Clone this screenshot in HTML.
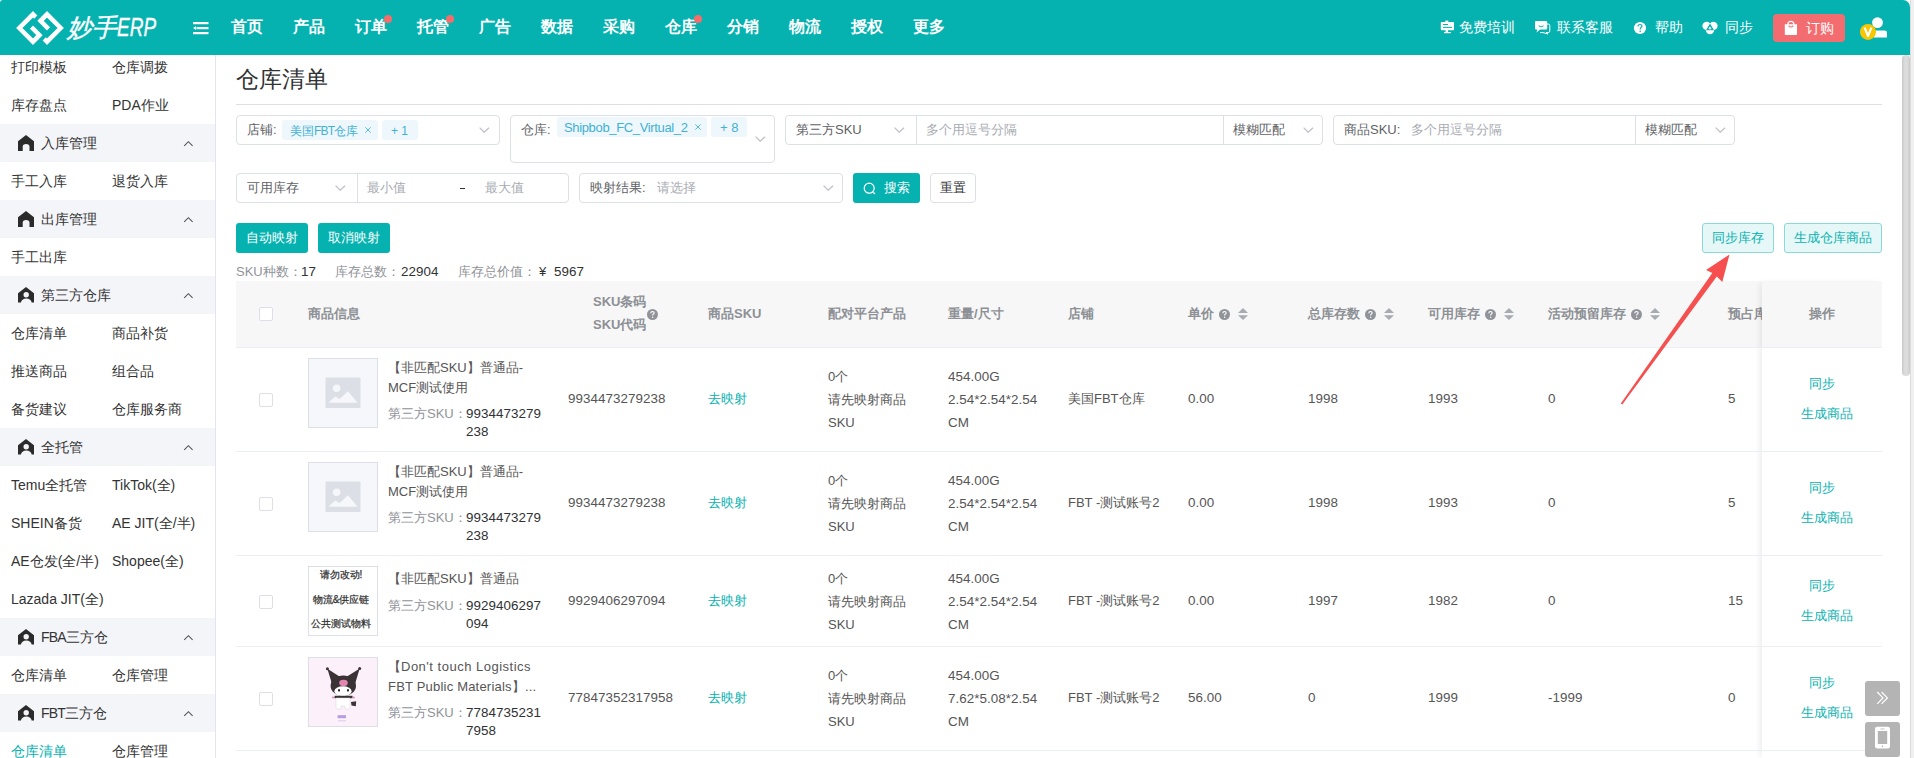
<!DOCTYPE html>
<html><head><meta charset="utf-8">
<style>
*{box-sizing:border-box;margin:0;padding:0}
html,body{width:1914px;height:758px;overflow:hidden;background:#fff}
body{position:relative;font-family:"Liberation Sans",sans-serif;font-size:13px;color:#333}
.a{position:absolute;white-space:nowrap}
#hdr{position:absolute;left:0;top:0;width:1910px;height:55px;background:#05b2b0;border-radius:3px 7px 0 0}
.nav{position:absolute;top:17px;font-size:16px;font-weight:bold;color:#fff;line-height:20px}
.dot{position:absolute;width:8px;height:8px;border-radius:50%;background:#f56c6c}
.hr{position:absolute;top:17px;font-size:14px;color:#fff;line-height:20px;font-weight:500}
#side{position:absolute;left:0;top:55px;width:216px;height:703px;border-right:1px solid #e4e4ee;overflow:hidden}
.si{position:absolute;font-size:14px;color:#333;line-height:20px}
.grp{position:absolute;left:0;width:215px;height:38px;background:#f4f5f9}
.grp .t{position:absolute;left:41px;top:9px;font-size:14px;line-height:20px;color:#333}
.grp svg.ic{position:absolute;left:18px;top:11px}
.grp svg.ch{position:absolute;left:183px;top:16px}
.box{position:absolute;border:1px solid #dcdfe6;border-radius:4px;background:#fff}
.lbl{position:absolute;font-size:13px;color:#606266;line-height:18px}
.ph{position:absolute;font-size:13px;color:#a8abb2;line-height:18px}
.tag{position:absolute;height:20px;background:#eef7fb;border-radius:3px;color:#48b4d8;font-size:12px;line-height:20px;padding:0 8px}
.chev{position:absolute}
.btn{position:absolute;height:30px;border-radius:3px;font-size:13px;line-height:30px;text-align:center}
.th{position:absolute;font-size:13px;font-weight:bold;color:#8d9095;line-height:18px}
.td{position:absolute;font-size:13px;color:#555;line-height:18px}
.lnk{color:#0ab1ae}
.tagt{font-size:12px;line-height:18px;color:#42b1d6}
.num{font-size:13.4px!important;letter-spacing:0.05px}
.cb{position:absolute;left:259px;width:14px;height:14px;border:1px solid #dcdfe6;border-radius:2px;background:#fff}
.hl{position:absolute;left:236px;width:1646px;height:1px;background:#ebeef5}
</style></head><body>

<!-- HEADER -->
<div id="hdr">
  <svg class="a" style="left:0;top:0" width="80" height="55" viewBox="0 0 80 55">
    <g fill="none" stroke="#fff" stroke-width="4.5" stroke-linejoin="miter" stroke-miterlimit="10">
      <polyline points="35.8,17.1 33,14.3 19.3,28 33,41.7 39.5,35.2 31.5,27.2"/>
      <polyline points="44.2,38.9 47,41.7 60.7,28 47,14.3 40.5,20.8 48.5,28.8"/>
    </g>
  </svg>
  <div class="a" style="left:67px;top:12px;font-size:25px;font-style:italic;color:#fff;line-height:30px;-webkit-text-stroke:0.35px #fff">妙手<span style="display:inline-block;transform:scaleX(0.76);transform-origin:0 0">ERP</span></div>
  <svg class="a" style="left:193px;top:21px" width="16" height="14" viewBox="0 0 16 14">
    <rect x="0" y="1" width="15.5" height="2.2" fill="#fff"/>
    <rect x="3.5" y="6" width="12" height="2.2" fill="#fff"/>
    <rect x="0" y="11" width="15.5" height="2.2" fill="#fff"/>
    <polygon points="0,7.1 3,5.2 3,9" fill="#fff"/>
  </svg>
  <div class="nav" style="left:231px">首页</div>
  <div class="nav" style="left:293px">产品</div>
  <div class="nav" style="left:355px">订单</div>
  <div class="nav" style="left:417px">托管</div>
  <div class="nav" style="left:479px">广告</div>
  <div class="nav" style="left:541px">数据</div>
  <div class="nav" style="left:603px">采购</div>
  <div class="nav" style="left:665px">仓库</div>
  <div class="nav" style="left:727px">分销</div>
  <div class="nav" style="left:789px">物流</div>
  <div class="nav" style="left:851px">授权</div>
  <div class="nav" style="left:913px">更多</div>
  <div class="dot" style="left:384px;top:15px"></div>
  <div class="dot" style="left:446px;top:15px"></div>
  <div class="dot" style="left:694px;top:15px"></div>

  <div class="hr" style="left:1459px">免费培训</div>
  <div class="hr" style="left:1557px">联系客服</div>
  <div class="hr" style="left:1655px">帮助</div>
  <div class="hr" style="left:1725px">同步</div>
  <div class="a" style="left:1773px;top:14px;width:72px;height:28px;background:#f36d70;border-radius:4px"></div>
  <div class="hr" style="left:1806px;top:18px">订购</div>
<svg class="a" style="left:1440px;top:20px" width="15" height="14" viewBox="1440 20 15 14">
<rect x="1445.3" y="20.6" width="3" height="1.8" fill="#fff"/>
<rect x="1440.8" y="22" width="13.2" height="8.2" rx="0.8" fill="#fff"/>
<rect x="1443" y="24" width="5" height="1" fill="#05b2b0"/>
<rect x="1443" y="26.9" width="9" height="1" fill="#05b2b0"/>
<rect x="1445.6" y="30" width="2.4" height="2.2" fill="#fff"/>
<rect x="1444" y="32" width="6.8" height="1.2" fill="#fff"/>
</svg>
<svg class="a" style="left:1534px;top:20px" width="17" height="15" viewBox="1534 20 17 15">
<path d="M1538 24 H1548.2 Q1549.8 24 1549.8 25.6 V31 Q1549.8 32.6 1548.2 32.6 H1546 L1548 34 L1543 32.6 H1540" fill="none" stroke="#fff" stroke-width="1"/>
<path d="M1536 21 H1546 Q1547.2 21 1547.2 22.2 V28.3 Q1547.2 29.5 1546 29.5 H1540 L1536.5 32.6 L1537.3 29.5 H1536 Q1535 29.5 1535 28.3 V22.2 Q1535 21 1536 21 Z" fill="#fff"/>
<path d="M1538.6 25.8 Q1541 28 1543.6 25.8" fill="none" stroke="#05b2b0" stroke-width="1"/>
</svg>
<svg class="a" style="left:1633px;top:21px" width="14" height="14" viewBox="1633 21 14 14">
<circle cx="1640" cy="28" r="6.1" fill="#fff"/>
<path d="M1638 26.4 Q1638 24.5 1640 24.5 Q1642 24.5 1642 26.1 Q1642 27.1 1640.9 27.7 Q1640.2 28.1 1640.2 29.5" fill="none" stroke="#05b2b0" stroke-width="1.2"/>
<circle cx="1640.2" cy="31.2" r="0.8" fill="#05b2b0"/>
</svg>
<svg class="a" style="left:1702px;top:20px" width="17" height="16" viewBox="1702 20 17 16">
<circle cx="1706.6" cy="25.9" r="4.2" fill="#fff"/>
<circle cx="1713.4" cy="25.9" r="4.2" fill="#fff"/>
<circle cx="1710" cy="30.1" r="4.2" fill="#fff"/>
<polygon points="1710,23.6 1714,30.2 1706,30.2" fill="#05b2b0"/>
<circle cx="1710" cy="28.2" r="1.2" fill="#fff"/>
</svg>
<svg class="a" style="left:1784px;top:20px" width="14" height="16" viewBox="1784 20 14 16">
<circle cx="1790.9" cy="24.3" r="3" fill="none" stroke="#fff" stroke-width="1.3"/>
<path d="M1784.8 24.2 H1797 V34.3 Q1797 35 1796.3 35 H1785.5 Q1784.8 35 1784.8 34.3 Z" fill="#fff"/>
<path d="M1788.6 25.6 Q1790.9 28.4 1793.2 25.6" fill="none" stroke="#f36d70" stroke-width="1.1"/>
</svg>
<svg class="a" style="left:1858px;top:15px" width="32" height="26" viewBox="1858 15 32 26">
<circle cx="1877.5" cy="22.6" r="5.4" fill="#fff"/>
<path d="M1874 37.6 V32.6 Q1874 30.4 1876.4 30.4 H1884.7 Q1887 30.4 1887 32.6 V37.6 Z" fill="#fff"/>
<circle cx="1868" cy="31.9" r="8" fill="#f9c702"/>
<path d="M1864.6 27.6 L1868 36 L1871.4 27.6" fill="none" stroke="#fff" stroke-width="2.1" stroke-linejoin="round"/>
</svg>
</div>
<div class="a" style="left:1910px;top:0;width:4px;height:758px;background:#f0f0f0;border-left:1px solid #dcdcdc"></div>
<div class="a" style="left:1902px;top:55px;width:8px;height:321px;background:linear-gradient(to right,#cacaca,#dcdcdc 35%,#dcdcdc 65%,#cacaca);border-radius:4px"></div>

<!-- SIDEBAR -->
<div id="side"></div>
<div class="si" style="left:11px;top:57px;">打印模板</div>
<div class="si" style="left:112px;top:57px;">仓库调拨</div>
<div class="si" style="left:11px;top:95px;">库存盘点</div>
<div class="si" style="left:112px;top:95px;">PDA作业</div>
<div class="grp" style="top:124px"><svg class="ic" width="16" height="16" viewBox="0 0 16 16"><path d="M8 0 L16 6.3 V16 H11.5 V11.6 A3.4 2.7 0 0 0 4.7 11.6 V16 H0 V6.3 Z" fill="#2b2b2b"/></svg><div class="t">入库管理</div><svg class="ch" width="11" height="7" viewBox="0 0 11 7"><polyline points="1.2,5.9 5.4,1.7 9.6,5.9" fill="none" stroke="#555" stroke-width="1.1"/></svg></div>
<div class="si" style="left:11px;top:171px;">手工入库</div>
<div class="si" style="left:112px;top:171px;">退货入库</div>
<div class="grp" style="top:200px"><svg class="ic" width="16" height="16" viewBox="0 0 16 16"><path d="M8 0 L16 6.3 V16 H11.5 V11.6 A3.4 2.7 0 0 0 4.7 11.6 V16 H0 V6.3 Z" fill="#2b2b2b"/></svg><div class="t">出库管理</div><svg class="ch" width="11" height="7" viewBox="0 0 11 7"><polyline points="1.2,5.9 5.4,1.7 9.6,5.9" fill="none" stroke="#555" stroke-width="1.1"/></svg></div>
<div class="si" style="left:11px;top:247px;">手工出库</div>
<div class="grp" style="top:276px"><svg class="ic" width="16" height="16" viewBox="0 0 16 16"><path d="M8 0 L16 6.3 V15.5 H13.6 A5.3 3.9 0 0 0 3 15.5 H0 V6.3 Z M8.2 10.5 A2.7 2.7 0 1 0 8.2 5.1 A2.7 2.7 0 1 0 8.2 10.5 Z" fill="#2b2b2b" fill-rule="evenodd"/></svg><div class="t">第三方仓库</div><svg class="ch" width="11" height="7" viewBox="0 0 11 7"><polyline points="1.2,5.9 5.4,1.7 9.6,5.9" fill="none" stroke="#555" stroke-width="1.1"/></svg></div>
<div class="si" style="left:11px;top:323px;">仓库清单</div>
<div class="si" style="left:112px;top:323px;">商品补货</div>
<div class="si" style="left:11px;top:361px;">推送商品</div>
<div class="si" style="left:112px;top:361px;">组合品</div>
<div class="si" style="left:11px;top:399px;">备货建议</div>
<div class="si" style="left:112px;top:399px;">仓库服务商</div>
<div class="grp" style="top:428px"><svg class="ic" width="16" height="16" viewBox="0 0 16 16"><path d="M8 0 L16 6.3 V15.5 H13.6 A5.3 3.9 0 0 0 3 15.5 H0 V6.3 Z M8.2 10.5 A2.7 2.7 0 1 0 8.2 5.1 A2.7 2.7 0 1 0 8.2 10.5 Z" fill="#2b2b2b" fill-rule="evenodd"/></svg><div class="t">全托管</div><svg class="ch" width="11" height="7" viewBox="0 0 11 7"><polyline points="1.2,5.9 5.4,1.7 9.6,5.9" fill="none" stroke="#555" stroke-width="1.1"/></svg></div>
<div class="si" style="left:11px;top:475px;">Temu全托管</div>
<div class="si" style="left:112px;top:475px;">TikTok(全)</div>
<div class="si" style="left:11px;top:513px;">SHEIN备货</div>
<div class="si" style="left:112px;top:513px;">AE JIT(全/半)</div>
<div class="si" style="left:11px;top:551px;">AE仓发(全/半)</div>
<div class="si" style="left:112px;top:551px;">Shopee(全)</div>
<div class="si" style="left:11px;top:589px;">Lazada JIT(全)</div>
<div class="grp" style="top:618px"><svg class="ic" width="16" height="16" viewBox="0 0 16 16"><path d="M8 0 L16 6.3 V15.5 H13.6 A5.3 3.9 0 0 0 3 15.5 H0 V6.3 Z M8.2 10.5 A2.7 2.7 0 1 0 8.2 5.1 A2.7 2.7 0 1 0 8.2 10.5 Z" fill="#2b2b2b" fill-rule="evenodd"/></svg><div class="t"><span style="letter-spacing:-0.8px">FBA</span>三方仓</div><svg class="ch" width="11" height="7" viewBox="0 0 11 7"><polyline points="1.2,5.9 5.4,1.7 9.6,5.9" fill="none" stroke="#555" stroke-width="1.1"/></svg></div>
<div class="si" style="left:11px;top:665px;">仓库清单</div>
<div class="si" style="left:112px;top:665px;">仓库管理</div>
<div class="grp" style="top:694px"><svg class="ic" width="16" height="16" viewBox="0 0 16 16"><path d="M8 0 L16 6.3 V15.5 H13.6 A5.3 3.9 0 0 0 3 15.5 H0 V6.3 Z M8.2 10.5 A2.7 2.7 0 1 0 8.2 5.1 A2.7 2.7 0 1 0 8.2 10.5 Z" fill="#2b2b2b" fill-rule="evenodd"/></svg><div class="t"><span style="letter-spacing:-0.8px">FBT</span>三方仓</div><svg class="ch" width="11" height="7" viewBox="0 0 11 7"><polyline points="1.2,5.9 5.4,1.7 9.6,5.9" fill="none" stroke="#555" stroke-width="1.1"/></svg></div>
<div class="si" style="left:11px;top:741px;color:#05b2b0;">仓库清单</div>
<div class="si" style="left:112px;top:741px;">仓库管理</div>

<!-- CONTENT -->
<div class="a" style="left:236px;top:64px;font-size:23px;line-height:30px;color:#303133">仓库清单</div>
<div class="a" style="left:236px;top:104px;width:1646px;height:1px;background:#dcdfe6"></div>
<div class="box" style="left:236px;top:115px;width:264px;height:30px"></div>
<div class="lbl" style="left:247px;top:121px">店铺:</div>
<div class="tag" style="left:282px;top:120px;width:96px"></div>
<div class="a tagt" style="left:290px;top:122px">美国<span style="letter-spacing:-0.8px">FBT</span>仓库</div>
<svg class="a" style="left:365px;top:127px" width="6" height="6" viewBox="0 0 6 6"><path d="M0.3 0.3 L5.7 5.7 M5.7 0.3 L0.3 5.7" stroke="#48b4d8" stroke-width="0.9"/></svg>
<div class="tag" style="left:382px;top:120px;width:36px"></div>
<div class="a tagt" style="left:391px;top:122px">+ 1</div>
<svg class="a" style="left:479px;top:127px" width="11" height="6" viewBox="0 0 11 6"><polyline points="0.6,0.6 5.2,5.2 10,0.8" fill="none" stroke="#bdc0c6" stroke-width="1.25"/></svg>
<div class="box" style="left:510px;top:115px;width:265px;height:48px"></div>
<div class="lbl" style="left:521px;top:121px">仓库:</div>
<div class="tag" style="left:557px;top:117px;width:150px"></div>
<div class="a tagt" style="left:564px;top:119px;font-size:13px;letter-spacing:-0.35px">Shipbob_FC_Virtual_2</div>
<svg class="a" style="left:695px;top:124px" width="6" height="6" viewBox="0 0 6 6"><path d="M0.3 0.3 L5.7 5.7 M5.7 0.3 L0.3 5.7" stroke="#48b4d8" stroke-width="0.9"/></svg>
<div class="tag" style="left:711px;top:117px;width:36px"></div>
<div class="a tagt" style="left:720px;top:119px;font-size:13px">+ 8</div>
<svg class="a" style="left:755px;top:136px" width="11" height="6" viewBox="0 0 11 6"><polyline points="0.6,0.6 5.2,5.2 10,0.8" fill="none" stroke="#bdc0c6" stroke-width="1.25"/></svg>
<div class="box" style="left:785px;top:115px;width:538px;height:30px"></div>
<div class="a" style="left:916px;top:116px;width:1px;height:28px;background:#dcdfe6"></div>
<div class="a" style="left:1223px;top:116px;width:1px;height:28px;background:#dcdfe6"></div>
<div class="lbl" style="left:796px;top:121px">第三方SKU</div>
<svg class="a" style="left:894px;top:127px" width="11" height="6" viewBox="0 0 11 6"><polyline points="0.6,0.6 5.2,5.2 10,0.8" fill="none" stroke="#bdc0c6" stroke-width="1.25"/></svg>
<div class="ph" style="left:926px;top:121px">多个用逗号分隔</div>
<div class="lbl" style="left:1233px;top:121px">模糊匹配</div>
<svg class="a" style="left:1303px;top:127px" width="11" height="6" viewBox="0 0 11 6"><polyline points="0.6,0.6 5.2,5.2 10,0.8" fill="none" stroke="#bdc0c6" stroke-width="1.25"/></svg>
<div class="box" style="left:1333px;top:115px;width:402px;height:30px"></div>
<div class="a" style="left:1635px;top:116px;width:1px;height:28px;background:#dcdfe6"></div>
<div class="lbl" style="left:1344px;top:121px">商品SKU:</div>
<div class="ph" style="left:1411px;top:121px">多个用逗号分隔</div>
<div class="lbl" style="left:1645px;top:121px">模糊匹配</div>
<svg class="a" style="left:1715px;top:127px" width="11" height="6" viewBox="0 0 11 6"><polyline points="0.6,0.6 5.2,5.2 10,0.8" fill="none" stroke="#bdc0c6" stroke-width="1.25"/></svg>
<div class="box" style="left:236px;top:173px;width:333px;height:30px"></div>
<div class="a" style="left:357px;top:174px;width:1px;height:28px;background:#dcdfe6"></div>
<div class="lbl" style="left:247px;top:179px">可用库存</div>
<svg class="a" style="left:335px;top:185px" width="11" height="6" viewBox="0 0 11 6"><polyline points="0.6,0.6 5.2,5.2 10,0.8" fill="none" stroke="#bdc0c6" stroke-width="1.25"/></svg>
<div class="ph" style="left:367px;top:179px">最小值</div>
<div class="a" style="left:460px;top:188px;width:5px;height:1px;background:#303133"></div>
<div class="ph" style="left:485px;top:179px">最大值</div>
<div class="box" style="left:579px;top:173px;width:264px;height:30px"></div>
<div class="lbl" style="left:590px;top:179px">映射结果:</div>
<div class="ph" style="left:657px;top:179px">请选择</div>
<svg class="a" style="left:823px;top:185px" width="11" height="6" viewBox="0 0 11 6"><polyline points="0.6,0.6 5.2,5.2 10,0.8" fill="none" stroke="#bdc0c6" stroke-width="1.25"/></svg>
<div class="btn" style="left:853px;top:173px;width:67px;background:#05b2b0"></div>
<svg class="a" style="left:863px;top:182px" width="13" height="13" viewBox="0 0 13 13"><circle cx="6.2" cy="6.2" r="5" fill="none" stroke="#fff" stroke-width="1.2"/><line x1="9.8" y1="9.8" x2="12" y2="12" stroke="#fff" stroke-width="1.2"/></svg>
<div class="lbl" style="left:884px;top:179px;color:#fff;font-weight:500">搜索</div>
<div class="box" style="left:930px;top:173px;width:46px;height:30px"></div>
<div class="lbl" style="left:940px;top:179px;color:#303133">重置</div>
<div class="btn" style="left:236px;top:223px;width:72px;background:#05b2b0"></div>
<div class="a" style="left:246px;top:229px;font-size:13px;line-height:18px;color:#fff;font-weight:500">自动映射</div>
<div class="btn" style="left:318px;top:223px;width:72px;background:#05b2b0"></div>
<div class="a" style="left:328px;top:229px;font-size:13px;line-height:18px;color:#fff;font-weight:500">取消映射</div>
<div class="btn" style="left:1702px;top:223px;width:72px;background:#e6f7f7;border:1px solid #8ad9d7"></div>
<div class="a" style="left:1712px;top:229px;font-size:13px;line-height:18px;color:#05b2b0">同步库存</div>
<div class="btn" style="left:1784px;top:223px;width:98px;background:#e6f7f7;border:1px solid #8ad9d7"></div>
<div class="a" style="left:1794px;top:229px;font-size:13px;line-height:18px;color:#05b2b0">生成仓库商品</div>
<div class="a" style="left:236px;top:263px;font-size:13px;line-height:18px;color:#909399">SKU种数：</div>
<div class="a num" style="left:301px;top:263px;font-size:13px;line-height:18px;color:#303133">17</div>
<div class="a" style="left:335px;top:263px;font-size:13px;line-height:18px;color:#909399">库存总数：</div>
<div class="a num" style="left:401px;top:263px;font-size:13px;line-height:18px;color:#303133">22904</div>
<div class="a" style="left:458px;top:263px;font-size:13px;line-height:18px;color:#909399">库存总价值：</div>
<div class="a" style="left:539px;top:263px;font-size:13px;line-height:18px;color:#303133">¥</div>
<div class="a num" style="left:554px;top:263px;font-size:13px;line-height:18px;color:#303133">5967</div>
<div class="a" style="left:236px;top:281px;width:1646px;height:66px;background:#f7f7f7"></div>
<div class="hl" style="top:347px"></div>
<div class="cb" style="top:307px"></div>
<div class="th" style="left:308px;top:305px">商品信息</div>
<div class="th" style="left:593px;top:290px;line-height:23px">SKU条码<br>SKU代码</div>
<svg class="a" style="left:647px;top:309px" width="11" height="11" viewBox="0 0 11 11"><circle cx="5.5" cy="5.5" r="5.5" fill="#909399"/><path d="M3.9 4.2 Q3.9 2.5 5.5 2.5 Q7.1 2.5 7.1 3.9 Q7.1 4.8 6.1 5.3 Q5.6 5.6 5.6 6.5" fill="none" stroke="#fff" stroke-width="1.1"/><circle cx="5.6" cy="8.2" r="0.7" fill="#fff"/></svg>
<div class="th" style="left:708px;top:305px">商品SKU</div>
<div class="th" style="left:828px;top:305px">配对平台产品</div>
<div class="th" style="left:948px;top:305px">重量/尺寸</div>
<div class="th" style="left:1068px;top:305px">店铺</div>
<div class="th" style="left:1188px;top:305px">单价</div>
<svg class="a" style="left:1219px;top:309px" width="11" height="11" viewBox="0 0 11 11"><circle cx="5.5" cy="5.5" r="5.5" fill="#909399"/><path d="M3.9 4.2 Q3.9 2.5 5.5 2.5 Q7.1 2.5 7.1 3.9 Q7.1 4.8 6.1 5.3 Q5.6 5.6 5.6 6.5" fill="none" stroke="#fff" stroke-width="1.1"/><circle cx="5.6" cy="8.2" r="0.7" fill="#fff"/></svg>
<svg class="a" style="left:1238px;top:308px" width="10" height="13" viewBox="0 0 10 13"><polygon points="5,0 10,5 0,5" fill="#a8abb2"/><polygon points="0,7.3 10,7.3 5,12.1" fill="#a8abb2"/></svg>
<div class="th" style="left:1308px;top:305px">总库存数</div>
<svg class="a" style="left:1365px;top:309px" width="11" height="11" viewBox="0 0 11 11"><circle cx="5.5" cy="5.5" r="5.5" fill="#909399"/><path d="M3.9 4.2 Q3.9 2.5 5.5 2.5 Q7.1 2.5 7.1 3.9 Q7.1 4.8 6.1 5.3 Q5.6 5.6 5.6 6.5" fill="none" stroke="#fff" stroke-width="1.1"/><circle cx="5.6" cy="8.2" r="0.7" fill="#fff"/></svg>
<svg class="a" style="left:1384px;top:308px" width="10" height="13" viewBox="0 0 10 13"><polygon points="5,0 10,5 0,5" fill="#a8abb2"/><polygon points="0,7.3 10,7.3 5,12.1" fill="#a8abb2"/></svg>
<div class="th" style="left:1428px;top:305px">可用库存</div>
<svg class="a" style="left:1485px;top:309px" width="11" height="11" viewBox="0 0 11 11"><circle cx="5.5" cy="5.5" r="5.5" fill="#909399"/><path d="M3.9 4.2 Q3.9 2.5 5.5 2.5 Q7.1 2.5 7.1 3.9 Q7.1 4.8 6.1 5.3 Q5.6 5.6 5.6 6.5" fill="none" stroke="#fff" stroke-width="1.1"/><circle cx="5.6" cy="8.2" r="0.7" fill="#fff"/></svg>
<svg class="a" style="left:1504px;top:308px" width="10" height="13" viewBox="0 0 10 13"><polygon points="5,0 10,5 0,5" fill="#a8abb2"/><polygon points="0,7.3 10,7.3 5,12.1" fill="#a8abb2"/></svg>
<div class="th" style="left:1548px;top:305px">活动预留库存</div>
<svg class="a" style="left:1631px;top:309px" width="11" height="11" viewBox="0 0 11 11"><circle cx="5.5" cy="5.5" r="5.5" fill="#909399"/><path d="M3.9 4.2 Q3.9 2.5 5.5 2.5 Q7.1 2.5 7.1 3.9 Q7.1 4.8 6.1 5.3 Q5.6 5.6 5.6 6.5" fill="none" stroke="#fff" stroke-width="1.1"/><circle cx="5.6" cy="8.2" r="0.7" fill="#fff"/></svg>
<svg class="a" style="left:1650px;top:308px" width="10" height="13" viewBox="0 0 10 13"><polygon points="5,0 10,5 0,5" fill="#a8abb2"/><polygon points="0,7.3 10,7.3 5,12.1" fill="#a8abb2"/></svg>
<div class="th" style="left:1728px;top:305px">预占库存</div>
<div class="cb" style="top:393px"></div>
<div class="a" style="left:308px;top:358px;width:70px;height:70px;border:1px solid #dcdfe6;background:#f5f7fa"></div><svg class="a" style="left:325px;top:377px" width="36" height="32" viewBox="0 0 36 32"><rect x="0.5" y="0.6" width="35" height="30.4" rx="1" fill="#dcdfe6"/><circle cx="11.6" cy="11.2" r="3.8" fill="#f5f7fa"/><polygon points="3.3,25.7 10.2,19.6 14.6,22.1 23,14.2 32.6,25.7" fill="#f5f7fa"/></svg>
<div class="td" style="left:388px;top:358px;line-height:20px">【非匹配SKU】普通品-<br>MCF测试使用</div>
<div class="td" style="left:388px;top:405px;color:#909399">第三方SKU：</div>
<div class="td num" style="left:466px;top:405px;color:#303133;line-height:18px">9934473279<br>238</div>
<div class="td num" style="left:568px;top:390px">9934473279238</div>
<div class="td" style="left:708px;top:390px;color:#05b2b0">去映射</div>
<div class="td" style="left:828px;top:365px;line-height:23px">0个<br>请先映射商品<br>SKU</div>
<div class="td num" style="left:948px;top:365px;line-height:23px">454.00G<br>2.54*2.54*2.54<br>CM</div>
<div class="td" style="left:1068px;top:390px">美国FBT仓库</div>
<div class="td num" style="left:1188px;top:390px">0.00</div>
<div class="td num" style="left:1308px;top:390px">1998</div>
<div class="td num" style="left:1428px;top:390px">1993</div>
<div class="td num" style="left:1548px;top:390px">0</div>
<div class="td num" style="left:1728px;top:390px">5</div>
<div class="cb" style="top:497px"></div>
<div class="a" style="left:308px;top:462px;width:70px;height:70px;border:1px solid #dcdfe6;background:#f5f7fa"></div><svg class="a" style="left:325px;top:481px" width="36" height="32" viewBox="0 0 36 32"><rect x="0.5" y="0.6" width="35" height="30.4" rx="1" fill="#dcdfe6"/><circle cx="11.6" cy="11.2" r="3.8" fill="#f5f7fa"/><polygon points="3.3,25.7 10.2,19.6 14.6,22.1 23,14.2 32.6,25.7" fill="#f5f7fa"/></svg>
<div class="td" style="left:388px;top:462px;line-height:20px">【非匹配SKU】普通品-<br>MCF测试使用</div>
<div class="td" style="left:388px;top:509px;color:#909399">第三方SKU：</div>
<div class="td num" style="left:466px;top:509px;color:#303133;line-height:18px">9934473279<br>238</div>
<div class="td num" style="left:568px;top:494px">9934473279238</div>
<div class="td" style="left:708px;top:494px;color:#05b2b0">去映射</div>
<div class="td" style="left:828px;top:469px;line-height:23px">0个<br>请先映射商品<br>SKU</div>
<div class="td num" style="left:948px;top:469px;line-height:23px">454.00G<br>2.54*2.54*2.54<br>CM</div>
<div class="td" style="left:1068px;top:494px">FBT -测试账号2</div>
<div class="td num" style="left:1188px;top:494px">0.00</div>
<div class="td num" style="left:1308px;top:494px">1998</div>
<div class="td num" style="left:1428px;top:494px">1993</div>
<div class="td num" style="left:1548px;top:494px">0</div>
<div class="td num" style="left:1728px;top:494px">5</div>
<div class="cb" style="top:595px"></div>
<div class="a" style="left:308px;top:566px;width:70px;height:70px;border:1px solid #dcdfe6;background:#fff;overflow:hidden"><div style="position:absolute;left:-2px;top:-4px;width:68px;font-size:10px;color:#333;-webkit-text-stroke:0.25px #333;text-align:center;line-height:24.6px">请勿改动!<br>物流&amp;供应链<br>公共测试物料</div></div>
<div class="td" style="left:388px;top:569px;line-height:20px">【非匹配SKU】普通品</div>
<div class="td" style="left:388px;top:597px;color:#909399">第三方SKU：</div>
<div class="td num" style="left:466px;top:597px;color:#303133;line-height:18px">9929406297<br>094</div>
<div class="td num" style="left:568px;top:592px">9929406297094</div>
<div class="td" style="left:708px;top:592px;color:#05b2b0">去映射</div>
<div class="td" style="left:828px;top:567px;line-height:23px">0个<br>请先映射商品<br>SKU</div>
<div class="td num" style="left:948px;top:567px;line-height:23px">454.00G<br>2.54*2.54*2.54<br>CM</div>
<div class="td" style="left:1068px;top:592px">FBT -测试账号2</div>
<div class="td num" style="left:1188px;top:592px">0.00</div>
<div class="td num" style="left:1308px;top:592px">1997</div>
<div class="td num" style="left:1428px;top:592px">1982</div>
<div class="td num" style="left:1548px;top:592px">0</div>
<div class="td num" style="left:1728px;top:592px">15</div>
<div class="cb" style="top:692px"></div>
<div class="a" style="left:308px;top:657px;width:70px;height:70px;border:1px solid #dcdfe6;background:#fcf0fb"></div>
<svg class="a" style="left:308px;top:657px" width="70" height="70" viewBox="0 0 70 70">
<polygon points="19.4,11.8 31.5,19.5 24,27" fill="#3b3236"/>
<polygon points="51.7,11.5 39,19.5 47,27" fill="#3b3236"/>
<circle cx="19.4" cy="11.8" r="1.5" fill="#3b3236"/><circle cx="51.7" cy="11.5" r="1.5" fill="#3b3236"/>
<ellipse cx="35.3" cy="28.8" rx="12.7" ry="10.3" fill="#3b3236"/>
<ellipse cx="35" cy="34.2" rx="8.6" ry="5" fill="#fff"/>
<ellipse cx="35.5" cy="25.9" rx="4.3" ry="3.1" fill="#e487b0"/>
<ellipse cx="31" cy="33.3" rx="1" ry="1.4" fill="#222"/><ellipse cx="40" cy="33.3" rx="1" ry="1.4" fill="#222"/>
<rect x="26.5" y="38.8" width="18" height="2.4" fill="#3b3236"/>
<circle cx="25" cy="40.4" r="1" fill="#e487b0"/><circle cx="45.8" cy="40.4" r="1" fill="#e487b0"/>
<path d="M28 41 H42 V50.5 Q42 52 40.5 52 H37 V49 H33 V52 H29.5 Q28 52 28 50.5 Z" fill="#fff" stroke="#d8d0d6" stroke-width="0.5"/>
<path d="M43 45 L48.2 44.3 L47.8 49.2 L43.5 48.5 Z" fill="#3b3236"/>
<rect x="29.6" y="58.2" width="8.4" height="3" fill="#b99ce0"/>
<rect x="30" y="63.2" width="8" height="1.2" fill="#e0d3ea"/>
</svg>
<div class="td" style="left:388px;top:657px;line-height:20px">【<span style="letter-spacing:0.5px">Don't touch Logistics</span><br><span style="letter-spacing:0.2px">FBT Public Materials】...</span></div>
<div class="td" style="left:388px;top:704px;color:#909399">第三方SKU：</div>
<div class="td num" style="left:466px;top:704px;color:#303133;line-height:18px">7784735231<br>7958</div>
<div class="td num" style="left:568px;top:689px">77847352317958</div>
<div class="td" style="left:708px;top:689px;color:#05b2b0">去映射</div>
<div class="td" style="left:828px;top:664px;line-height:23px">0个<br>请先映射商品<br>SKU</div>
<div class="td num" style="left:948px;top:664px;line-height:23px">454.00G<br>7.62*5.08*2.54<br>CM</div>
<div class="td" style="left:1068px;top:689px">FBT -测试账号2</div>
<div class="td num" style="left:1188px;top:689px">56.00</div>
<div class="td num" style="left:1308px;top:689px">0</div>
<div class="td num" style="left:1428px;top:689px">1999</div>
<div class="td num" style="left:1548px;top:689px">-1999</div>
<div class="td num" style="left:1728px;top:689px">0</div>
<div class="a" style="left:1762px;top:281px;width:120px;height:477px;background:#fff;box-shadow:-4px 0 6px -2px rgba(0,0,0,0.08)"></div>
<div class="a" style="left:1762px;top:281px;width:120px;height:66px;background:#f7f7f7"></div>
<div class="th" style="left:1809px;top:305px">操作</div>
<div class="hl" style="top:451px"></div>
<div class="hl" style="top:555px"></div>
<div class="hl" style="top:646px"></div>
<div class="hl" style="top:750px"></div>
<div class="hl" style="top:347px"></div>
<div class="td" style="left:1809px;top:375px;color:#05b2b0">同步</div>
<div class="td" style="left:1801px;top:405px;color:#05b2b0">生成商品</div>
<div class="td" style="left:1809px;top:479px;color:#05b2b0">同步</div>
<div class="td" style="left:1801px;top:509px;color:#05b2b0">生成商品</div>
<div class="td" style="left:1809px;top:577px;color:#05b2b0">同步</div>
<div class="td" style="left:1801px;top:607px;color:#05b2b0">生成商品</div>
<div class="td" style="left:1809px;top:674px;color:#05b2b0">同步</div>
<div class="td" style="left:1801px;top:704px;color:#05b2b0">生成商品</div>
<svg class="a" style="left:1600px;top:245px" width="140" height="170" viewBox="1600 245 140 170">
<polygon points="1729.5,254.4 1722.3,282 1716.8,276.6 1622.3,404.4 1620.8,403.4 1712.3,273 1706,270.1" fill="#f5504f"/>
</svg>
<div class="a" style="left:1865px;top:681px;width:35px;height:35px;background:#b4b4b4;border-radius:3px"></div>
<svg class="a" style="left:1865px;top:681px" width="35" height="35" viewBox="1865 681 35 35"><polyline points="1877.2,692 1883,697.9 1877.2,703.8" fill="none" stroke="#fff" stroke-width="1.2"/><polyline points="1881.6,692 1887.4,697.9 1881.6,703.8" fill="none" stroke="#fff" stroke-width="1.2"/></svg>
<div class="a" style="left:1865px;top:722px;width:35px;height:35px;background:#b4b4b4;border-radius:3px"></div>
<svg class="a" style="left:1865px;top:722px" width="35" height="35" viewBox="1865 722 35 35"><rect x="1875" y="726.8" width="15" height="21.6" rx="2.2" fill="#fff"/><rect x="1877.8" y="731" width="9.4" height="13" fill="#b4b4b4"/><rect x="1880.5" y="728.6" width="4" height="0.8" fill="#b4b4b4"/><circle cx="1882.5" cy="746.2" r="0.8" fill="#b4b4b4"/></svg>
</body></html>
